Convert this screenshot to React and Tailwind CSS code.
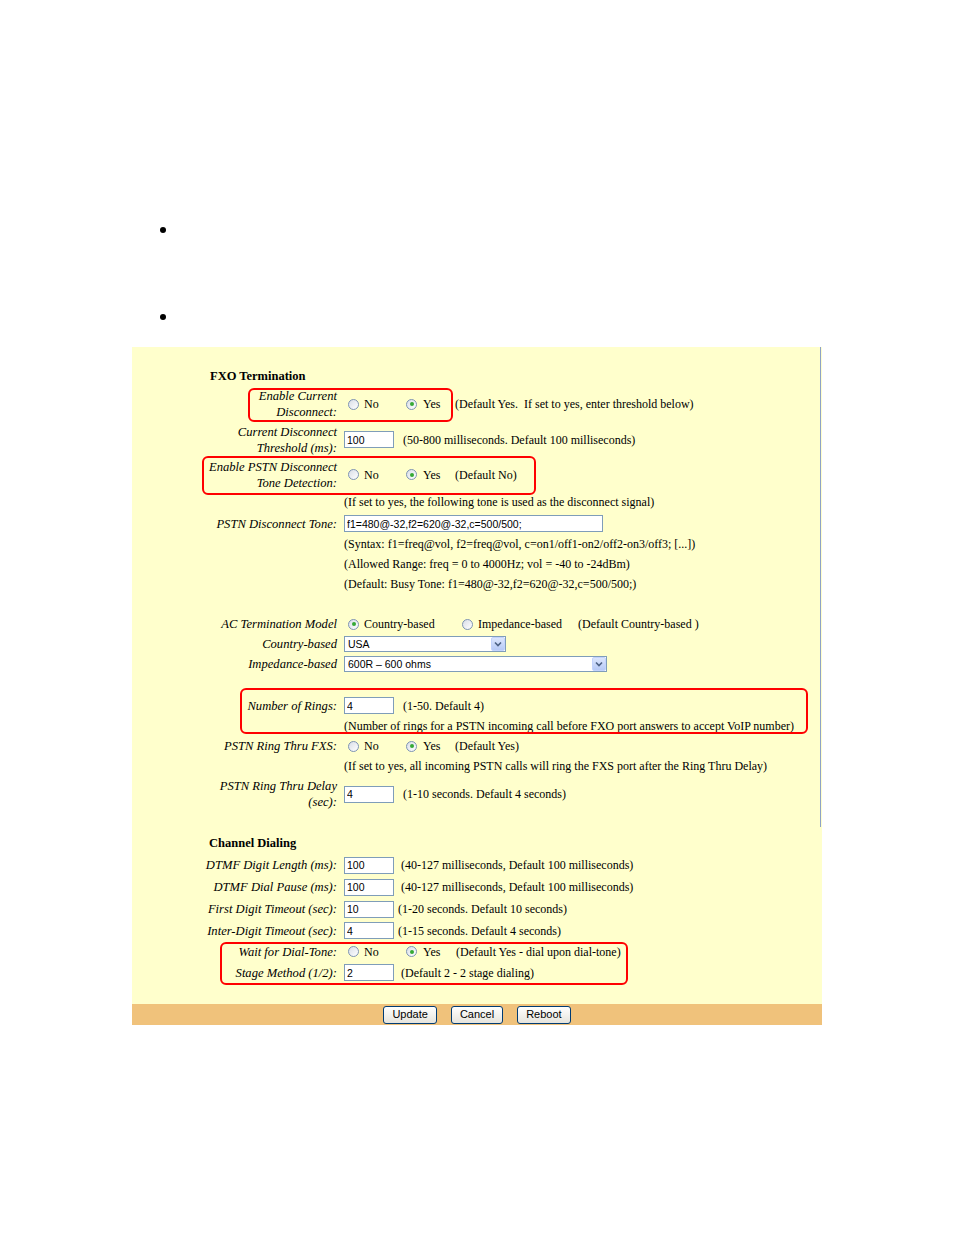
import React from 'react';

const serif = { fontFamily: '"Liberation Serif", "Times New Roman", serif' };
const sans = { fontFamily: '"Liberation Sans", Arial, sans-serif' };

const Radio = ({ checked }) => (
  <span className="inline-flex items-center justify-center w-[11px] h-[11px] rounded-full border border-[#7d93b4] bg-linear-to-br from-[#d9dee7] to-white shrink-0">
    {checked && <span className="w-[4px] h-[4px] rounded-full bg-[#36a936]" />}
  </span>
);

const YesNo = ({ yes = true, gap = 'w-[49px]', note }) => (
  <div className="flex items-center pl-[4px]">
    <span className="flex items-center w-[58px]">
      <Radio checked={!yes} />
      <span className="ml-[5px]">No</span>
    </span>
    <span className={`flex items-center ${gap}`}>
      <Radio checked={yes} />
      <span className="ml-[6px]">Yes</span>
    </span>
    <span className="whitespace-pre">{note}</span>
  </div>
);

const Field = ({ value, w = 'w-[50px]' }) => (
  <input
    readOnly
    value={value}
    style={sans}
    className={`${w} h-[17px] border border-[#7f9db9] bg-white px-[2px] text-[10.5px] text-black outline-none`}
  />
);

const Select = ({ value, w }) => (
  <div className={`${w} h-[16px] flex items-center border border-[#7f9db9] bg-white`} style={sans}>
    <span className="flex-1 pl-[3px] text-[10.5px] leading-none">{value}</span>
    <span className="w-[14px] h-[14px] flex items-center justify-center rounded-[2px] bg-linear-to-b from-[#dce6fd] to-[#b6c9f6] border border-[#c3d3fd]">
      <svg width="8" height="6" viewBox="0 0 8 6">
        <path d="M1 1.5 L4 4.5 L7 1.5" stroke="#4d6185" strokeWidth="1.6" fill="none" />
      </svg>
    </span>
  </div>
);

const Row = ({ h, label, children }) => (
  <div className={`flex items-center ${h}`}>
    <div className="w-[205px] text-right italic text-[12.6px] leading-[16px] text-black">{label}</div>
    <div className="ml-[7px] flex items-center">{children}</div>
  </div>
);

const Note = ({ h, children }) => (
  <div className={`flex items-center ${h}`}>
    <div className="ml-[212px]">{children}</div>
  </div>
);

const Btn = ({ children }) => (
  <button
    style={sans}
    className="h-[18px] px-[8px] border border-[#003c74] rounded-[3px] bg-linear-to-b from-white to-[#e6e4dc] text-[11px] leading-none text-black"
  >
    {children}
  </button>
);

export default function App() {
  return (
    <div className="w-[954px] min-h-[1235px] bg-white text-black" style={serif}>
      {/* bullets */}
      <div className="h-[347px] pl-[160px] pt-[227px]">
        <div className="w-[6px] h-[6px] rounded-full bg-black" />
        <div className="w-[6px] h-[6px] rounded-full bg-black mt-[81px]" />
      </div>

      <div className="ml-[132px] w-[690px]">
        <div className="relative bg-[#ffffcc] pt-[18px] text-[12px]">
          {/* right edge line */}
          <div className="absolute right-[1px] top-0 h-[480px] w-[1.5px] bg-[#8ea2c6]" />

          {/* annotation boxes */}
          <div className="absolute left-[116px] top-[41px] w-[205px] h-[34px] border-2 border-[#f00] rounded-[6px]" />
          <div className="absolute left-[70px] top-[109px] w-[334px] h-[39px] border-2 border-[#f00] rounded-[6px]" />
          <div className="absolute left-[108px] top-[341px] w-[568px] h-[46px] border-2 border-[#f00] rounded-[6px]" />
          <div className="absolute left-[88px] top-[595px] w-[408px] h-[43px] border-2 border-[#f00] rounded-[6px]" />

          <div className="h-[22px] flex items-center pl-[78px] font-bold text-[12.5px]">FXO Termination</div>

          <Row h="h-[34px]" label={<>Enable Current<br />Disconnect:</>}>
            <YesNo note="(Default Yes.  If set to yes, enter threshold below)" />
          </Row>
          <Row h="h-[37px]" label={<>Current Disconnect<br />Threshold (ms):</>}>
            <Field value="100" />
            <span className="ml-[9px]">(50-800 milliseconds. Default 100 milliseconds)</span>
          </Row>
          <Row h="h-[33px]" label={<>Enable PSTN Disconnect<br />Tone Detection:</>}>
            <YesNo note="(Default No)" />
          </Row>
          <Note h="h-[22px]">(If set to yes, the following tone is used as the disconnect signal)</Note>
          <Row h="h-[21px]" label="PSTN Disconnect Tone:">
            <Field value="f1=480@-32,f2=620@-32,c=500/500;" w="w-[259px]" />
          </Row>
          <Note h="h-[20px]">(Syntax: f1=freq@vol, f2=freq@vol, c=on1/off1-on2/off2-on3/off3; [...])</Note>
          <Note h="h-[20px]">(Allowed Range: freq = 0 to 4000Hz; vol = -40 to -24dBm)</Note>
          <Note h="h-[20px]">(Default: Busy Tone: f1=480@-32,f2=620@-32,c=500/500;)</Note>
          <div className="h-[20px]" />

          <Row h="h-[20px]" label="AC Termination Model">
            <div className="flex items-center pl-[4px]">
              <span className="flex items-center w-[114px]">
                <Radio checked />
                <span className="ml-[5px]">Country-based</span>
              </span>
              <span className="flex items-center w-[116px]">
                <Radio />
                <span className="ml-[5px]">Impedance-based</span>
              </span>
              <span>(Default Country-based )</span>
            </div>
          </Row>
          <Row h="h-[20px]" label="Country-based">
            <Select value="USA" w="w-[162px]" />
          </Row>
          <Row h="h-[20px]" label="Impedance-based">
            <Select value="600R – 600 ohms" w="w-[263px]" />
          </Row>
          <div className="h-[21px]" />

          <Row h="h-[21px]" label="Number of Rings:">
            <Field value="4" />
            <span className="ml-[9px]">(1-50. Default 4)</span>
          </Row>
          <Note h="h-[20px]">(Number of rings for a PSTN incoming call before FXO port answers to accept VoIP number)</Note>
          <Row h="h-[20px]" label="PSTN Ring Thru FXS:">
            <YesNo note="(Default Yes)" />
          </Row>
          <Note h="h-[20px]">(If set to yes, all incoming PSTN calls will ring the FXS port after the Ring Thru Delay)</Note>
          <Row h="h-[36px]" label={<>PSTN Ring Thru Delay<br />(sec):</>}>
            <Field value="4" />
            <span className="ml-[9px]">(1-10 seconds. Default 4 seconds)</span>
          </Row>
          <div className="h-[21px]" />

          <div className="h-[21px] flex items-center pl-[77px] font-bold text-[12.5px]">Channel Dialing</div>
          <Row h="h-[22px]" label="DTMF Digit Length (ms):">
            <Field value="100" />
            <span className="ml-[7px]">(40-127 milliseconds, Default 100 milliseconds)</span>
          </Row>
          <Row h="h-[22px]" label="DTMF Dial Pause (ms):">
            <Field value="100" />
            <span className="ml-[7px]">(40-127 milliseconds, Default 100 milliseconds)</span>
          </Row>
          <Row h="h-[22px]" label="First Digit Timeout (sec):">
            <Field value="10" />
            <span className="ml-[4px]">(1-20 seconds. Default 10 seconds)</span>
          </Row>
          <Row h="h-[21px]" label="Inter-Digit Timeout (sec):">
            <Field value="4" />
            <span className="ml-[4px]">(1-15 seconds. Default 4 seconds)</span>
          </Row>
          <Row h="h-[21px]" label="Wait for Dial-Tone:">
            <YesNo gap="w-[50px]" note="(Default Yes - dial upon dial-tone)" />
          </Row>
          <Row h="h-[21px]" label="Stage Method (1/2):">
            <Field value="2" />
            <span className="ml-[7px]">(Default 2 - 2 stage dialing)</span>
          </Row>
          <div className="h-[21px]" />
        </div>

        <div className="h-[21px] bg-[#f0c27b] flex items-center justify-center gap-[14px]">
          <Btn>Update</Btn>
          <Btn>Cancel</Btn>
          <Btn>Reboot</Btn>
        </div>
      </div>
    </div>
  );
}
